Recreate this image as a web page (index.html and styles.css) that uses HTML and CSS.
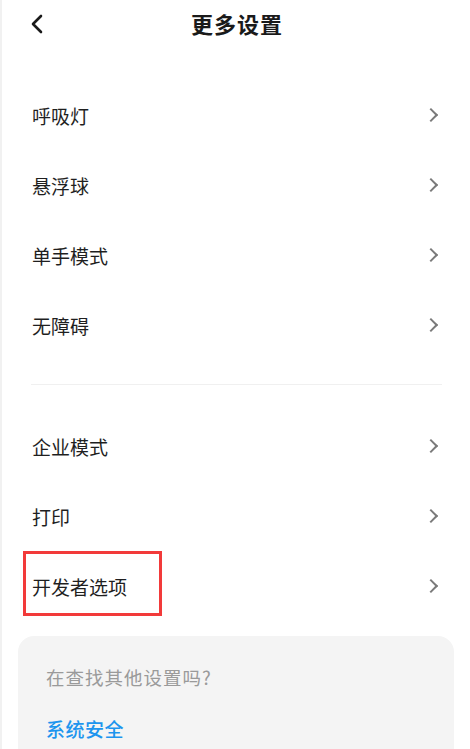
FILE: index.html
```html
<!DOCTYPE html>
<html lang="zh-CN">
<head>
    <meta charset="UTF-8">
    <meta name="viewport" content="width=device-width, initial-scale=1.0">
    <title>更多设置</title>
    <link rel="stylesheet" href="styles.css">
</head>
<body>
    <div class="screen">
        <header class="top-bar">
            <button class="back-button" aria-label="返回">
                <svg width="14" height="20" viewBox="0 0 14 20">
                    <path d="M11 2 L3 10 L11 18" fill="none" stroke="#1a1a1a" stroke-width="2.6" stroke-linecap="round" stroke-linejoin="round"/>
                </svg>
            </button>
            <h1>更多设置</h1>
        </header>

        <ul class="settings-list">
            <li class="settings-item"><span>呼吸灯</span><i class="chevron"></i></li>
            <li class="settings-item"><span>悬浮球</span><i class="chevron"></i></li>
            <li class="settings-item"><span>单手模式</span><i class="chevron"></i></li>
            <li class="settings-item"><span>无障碍</span><i class="chevron"></i></li>
        </ul>

        <div class="divider"></div>

        <ul class="settings-list">
            <li class="settings-item"><span>企业模式</span><i class="chevron"></i></li>
            <li class="settings-item"><span>打印</span><i class="chevron"></i></li>
            <li class="settings-item highlighted"><span>开发者选项</span><i class="chevron"></i></li>
        </ul>

        <div class="suggest-card">
            <p class="suggest-title">在查找其他设置吗?</p>
            <a class="suggest-link" href="#">系统安全</a>
        </div>
    </div>
</body>
</html>
```

FILE: styles.css
```css
html, body {
    margin: 0;
    padding: 0;
    background-color: #ffffff;
}
body {
    font-family: "Noto Sans CJK SC", "Noto Sans", sans-serif;
    color: #1f1f1f;
    overflow: hidden;
}

.screen {
    width: 470px;
    height: 749px;
    box-sizing: border-box;
    border-left: 2px solid #f1f1f1;
}

.top-bar {
    height: 50px;
    box-sizing: border-box;
    padding-bottom: 5px;
    position: relative;
    display: flex;
    align-items: center;
    justify-content: center;
}
.top-bar h1 {
    margin: 0;
    font-size: 22px;
    font-weight: bold;
    letter-spacing: 1px;
    color: #1a1a1a;
    margin-left: 2px;
}
.back-button {
    position: absolute;
    left: 28px;
    top: 14px;
    padding: 0;
    border: none;
    background: none;
    display: flex;
}

.settings-list {
    list-style: none;
    margin: 0;
    padding: 0;
}
.settings-list:first-of-type {
    margin-top: 30px;
}

.settings-item {
    height: 70px;
    display: flex;
    align-items: center;
    justify-content: space-between;
    padding: 0 30px 0 30px;
    font-size: 19px;
    position: relative;
}
.settings-item span {
    margin-top: 1px;
}

.chevron {
    width: 8px;
    height: 8px;
    border-top: 2px solid #7a7a7a;
    border-right: 2px solid #7a7a7a;
    transform: rotate(45deg);
    margin-right: 4px;
}

/* Rahmen um den Eintrag "开发者选项" */
.highlighted::before {
    content: "";
    position: absolute;
    left: 21px;
    top: 0;
    width: 133px;
    height: 59px;
    border: 3px solid #f23a3a;
}

.divider {
    height: 1px;
    background-color: #f0f0f0;
    margin: 24px 28px 26px 29px;
}

.suggest-card {
    margin: 15px 16px 0 16px;
    background-color: #f4f4f4;
    border-radius: 16px;
    padding: 28px 28px 40px 28px;
}
.suggest-title {
    margin: 0;
    font-size: 18.5px;
    letter-spacing: 1px;
    color: #9a9a9a;
}
.suggest-link {
    display: block;
    margin-top: 25px;
    font-size: 19px;
    letter-spacing: 0.5px;
    font-weight: 500;
    color: #1d95ee;
    text-decoration: none;
}
```
